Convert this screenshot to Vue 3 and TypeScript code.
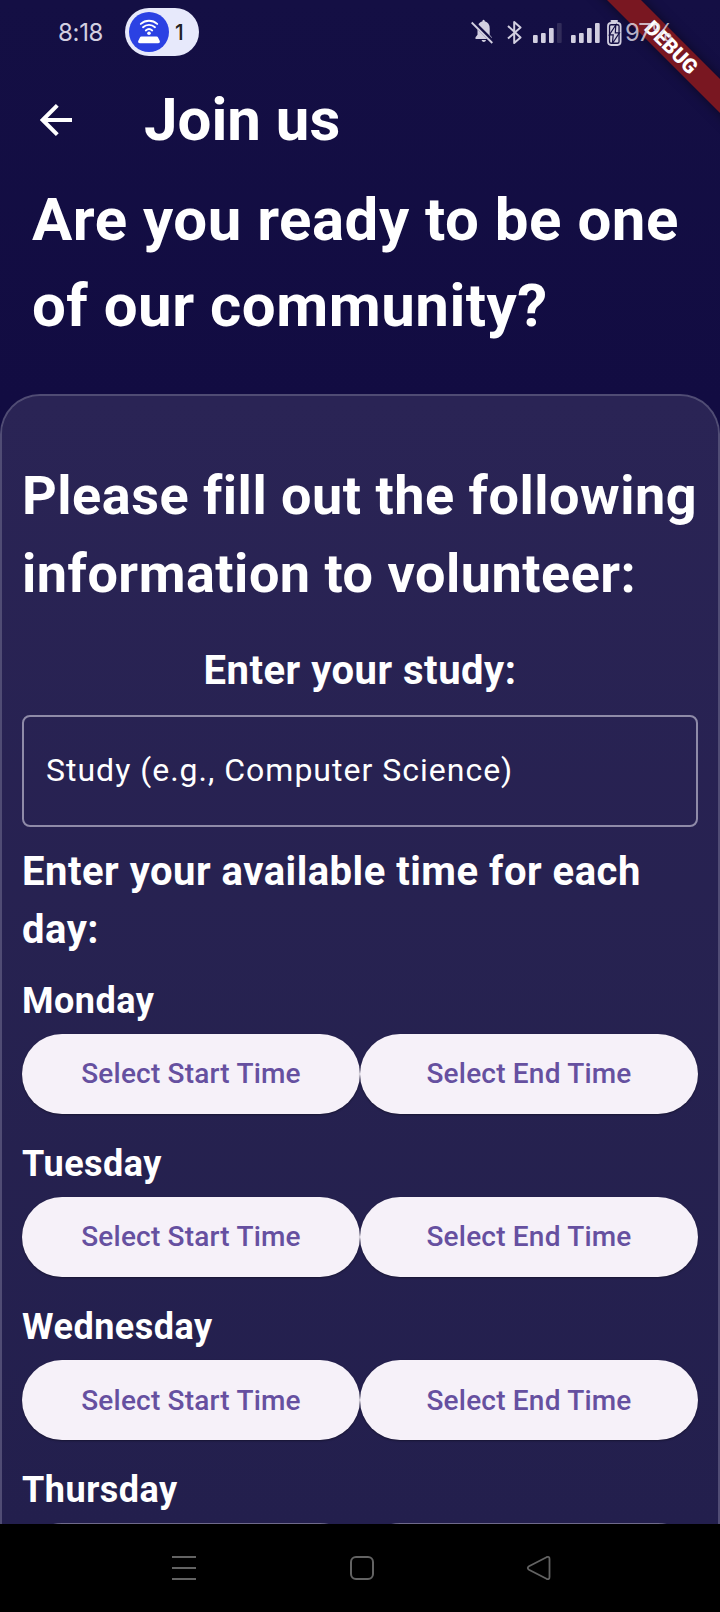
<script setup lang="ts">
import { ref } from 'vue'

interface DaySlot {
  name: string
  start: string
  end: string
}

const study = ref<string>('')

const days: DaySlot[] = [
  { name: 'Monday', start: 'Select Start Time', end: 'Select End Time' },
  { name: 'Tuesday', start: 'Select Start Time', end: 'Select End Time' },
  { name: 'Wednesday', start: 'Select Start Time', end: 'Select End Time' },
  { name: 'Thursday', start: '', end: '' },
]
</script>

<template>
  <div class="screen">
    <div class="banner">DEBUG</div>

    <header class="status">
      <span class="clock">8:18</span>
      <div class="pill">
        <svg class="hotspot" width="40" height="40" viewBox="0 0 40 40">
          <circle cx="20" cy="20" r="20" fill="#2b41e3" />
          <g fill="none" stroke="#fff" stroke-width="1.900" stroke-linecap="round">
            <path d="M11.800 11.900a12.200 12.200 0 0 1 16.400 0" />
            <path d="M14 15.200a9 9 0 0 1 12 0" />
            <path d="M16.800 18.400a5 5 0 0 1 6.400 0" />
          </g>
          <circle cx="20" cy="21.200" r="1.800" fill="#fff" />
          <path d="M12.500 24.500h15q1.200 0 1.700 1.200l1.700 3.500q.3 2.100-1.700 2.100H10.800q-2 0-1.700-2.100l1.700-3.500q.5-1.200 1.700-1.200z" fill="#fff" />
        </svg>
        <span>1</span>
      </div>
      <svg class="indicators" width="154" height="30" viewBox="0 0 154 30" fill="#d2cfe0">
        <path d="M4.500 22v-1.800l2-2.400V11.500q0-6 5-7.300V3.500q.8-1.500 2.200 0v.7q5 1.300 5 7.300v6.300l2.300 2.700V22zM10.500 23h4.600q-.7 2-2.300 2t-2.300-2z" />
        <path d="M1.500 4.500 22.500 25.500" stroke="#140f44" stroke-width="4" />
        <path d="M.7 5.500 21.300 26" stroke="#d2cfe0" stroke-width="1.800" />
        <path d="M37 9 49.500 20.500 43.200 26V5L49.500 10.500 37 21.500" fill="none" stroke="#d2cfe0" stroke-width="2" stroke-linejoin="round" />
        <rect x="62" y="18" width="4.700" height="8" rx="1" />
        <rect x="70" y="16" width="4.700" height="10" rx="1" />
        <rect x="78" y="11" width="4.700" height="15" rx="1" />
        <rect x="86" y="6" width="4.700" height="20" rx="1" fill="#312c5a" />
        <rect x="100" y="18" width="4.700" height="8" rx="1" />
        <rect x="108" y="16" width="4.700" height="10" rx="1" />
        <rect x="116" y="11" width="4.700" height="15" rx="1" />
        <rect x="124" y="6" width="4.700" height="20" rx="1" />
        <rect x="139.500" y="3" width="7.500" height="2" rx="1" />
        <rect x="137" y="6" width="12.600" height="22" rx="3.200" fill="none" stroke="#d2cfe0" stroke-width="1.800" />
        <rect x="139.200" y="8.500" width="8.200" height="17" rx="1" />
        <path d="M144.800 8 138.300 17.800H142.200L141.400 26.500 148.400 15.800H144.300z" fill="#d2cfe0" stroke="#140f44" stroke-width="1.200" />
      </svg>
      <span class="percent">97%</span>
    </header>

    <div class="appbar">
      <svg width="32" height="32" viewBox="0 0 32 32" fill="none" stroke="#fff" stroke-width="4">
        <path d="M32 16H3M17.300 1.400 2.700 16 17.300 30.600" />
      </svg>
      <h1>Join us</h1>
    </div>

    <p class="headline">Are you ready to be one of our community?</p>

    <main class="card">
      <h2>Please fill out the following information to volunteer:</h2>
      <h3 class="centered">Enter your study:</h3>
      <input v-model="study" class="field" type="text" placeholder="Study (e.g., Computer Science)" />
      <h3 class="available">Enter your available time for each day:</h3>
      <section v-for="day in days" :key="day.name" class="day">
        <h4>{{ day.name }}</h4>
        <div class="times">
          <button type="button">{{ day.start }}</button>
          <button type="button">{{ day.end }}</button>
        </div>
      </section>
    </main>

    <nav class="nav">
      <svg width="720" height="88" viewBox="0 0 720 88" fill="none" stroke="#636363" stroke-width="2">
        <path d="M172 33h24M172 44h24M172 55h24" />
        <rect x="351" y="33" width="22" height="22" rx="5" />
        <path d="M529 42.300 546.500 33.200Q549.500 32 549.500 35V53Q549.500 56 546.500 54.800L529 45.700Q526.500 44 529 42.300z" stroke-width="1.800" />
      </svg>
    </nav>
  </div>
</template>

<style>
body {
  margin: 0;
  background: #000;
}
</style>

<style scoped>
.screen {
  position: relative;
  display: flex;
  flex-direction: column;
  width: 720px;
  height: 1612px;
  overflow: hidden;
  box-sizing: border-box;
  background: linear-gradient(#140f44 0, #120c42 400px, #0b0639 1524px);
  color: #fff;
  font-family: Roboto, "Liberation Sans", sans-serif;
}

h1,
h2,
h3,
h4,
p {
  margin: 0;
  font-weight: 700;
  letter-spacing: 0.5px;
}

.banner {
  position: absolute;
  top: 36px;
  left: 552px;
  box-sizing: border-box;
  width: 240px;
  height: 24px;
  padding-right: 2px;
  background: #791721;
  box-shadow: 0 0 12px rgba(0, 0, 0, 0.5);
  font-size: 20.4px;
  font-weight: 900;
  line-height: 24px;
  text-align: center;
  transform: rotate(45deg);
}

.status {
  position: relative;
  display: flex;
  align-items: center;
  flex: none;
  height: 64px;
  padding-left: 58px;
  color: #d2cfe0;
  font-family: Inter, Roboto, sans-serif;
  font-size: 24px;
}

.clock {
  width: 67px;
  letter-spacing: -0.3px;
}

.pill {
  display: flex;
  align-items: center;
  gap: 6px;
  box-sizing: border-box;
  width: 74px;
  height: 48px;
  padding-left: 4px;
  border-radius: 24px;
  background: #e7e9fb;
  color: #222;
  font-size: 21px;
  font-weight: 500;
}

.indicators {
  margin-left: 272px;
}

.percent {
  color: rgba(226, 223, 236, 0.8);
  letter-spacing: -1.2px;
}

.appbar {
  display: flex;
  align-items: center;
  flex: none;
  height: 112px;
  padding-left: 40px;
}

.appbar h1 {
  margin-left: 72px;
  font-size: 60px;
  line-height: 76px;
  letter-spacing: 0;
}

.headline {
  flex: none;
  box-sizing: border-box;
  height: 218px;
  padding: 1px 32px 0;
  font-size: 60px;
  line-height: 86px;
}

.card {
  flex: 1;
  min-height: 0;
  overflow: hidden;
  box-sizing: border-box;
  padding: 61px 20px 0;
  border: 2px solid #504c74;
  border-bottom: 0;
  border-radius: 40px 40px 0 0;
  background: rgba(255, 255, 255, 0.1);
  background-clip: padding-box;
}

h2 {
  font-size: 54px;
  line-height: 78px;
}

h3 {
  font-size: 40px;
  line-height: 58px;
}

.centered {
  margin-top: 29px;
  text-align: center;
}

.field {
  display: block;
  box-sizing: border-box;
  width: 676px;
  height: 112px;
  margin: 15px 0 16px;
  padding: 0 22px 2px;
  border: 2px solid #8f8ba8;
  border-radius: 8px;
  outline: none;
  background: transparent;
  color: #fff;
  font-family: inherit;
  font-size: 32px;
  letter-spacing: 1px;
}

.field::placeholder {
  color: #fff;
  opacity: 1;
}

.available {
  margin-bottom: 15.800px;
}

.day {
  margin-bottom: 24px;
}

.day:last-child {
  margin-bottom: 0;
}

.day:last-child button {
  background: #6f6a8b;
  box-shadow: none;
}

h4 {
  font-size: 36px;
  line-height: 52.100px;
}

.times {
  display: flex;
  margin-top: 7px;
}

.times button {
  flex: 1;
  height: 80px;
  padding: 0;
  border: 0;
  border-radius: 40px;
  background: #f6f1f9;
  box-shadow: 0 1px 2px rgba(0, 0, 0, 0.35);
  color: #6650a0;
  font-family: inherit;
  font-size: 28px;
  font-weight: 500;
  letter-spacing: 0.2px;
}

.nav {
  flex: none;
  height: 88px;
  background: #000;
}

.nav svg {
  display: block;
}
</style>
